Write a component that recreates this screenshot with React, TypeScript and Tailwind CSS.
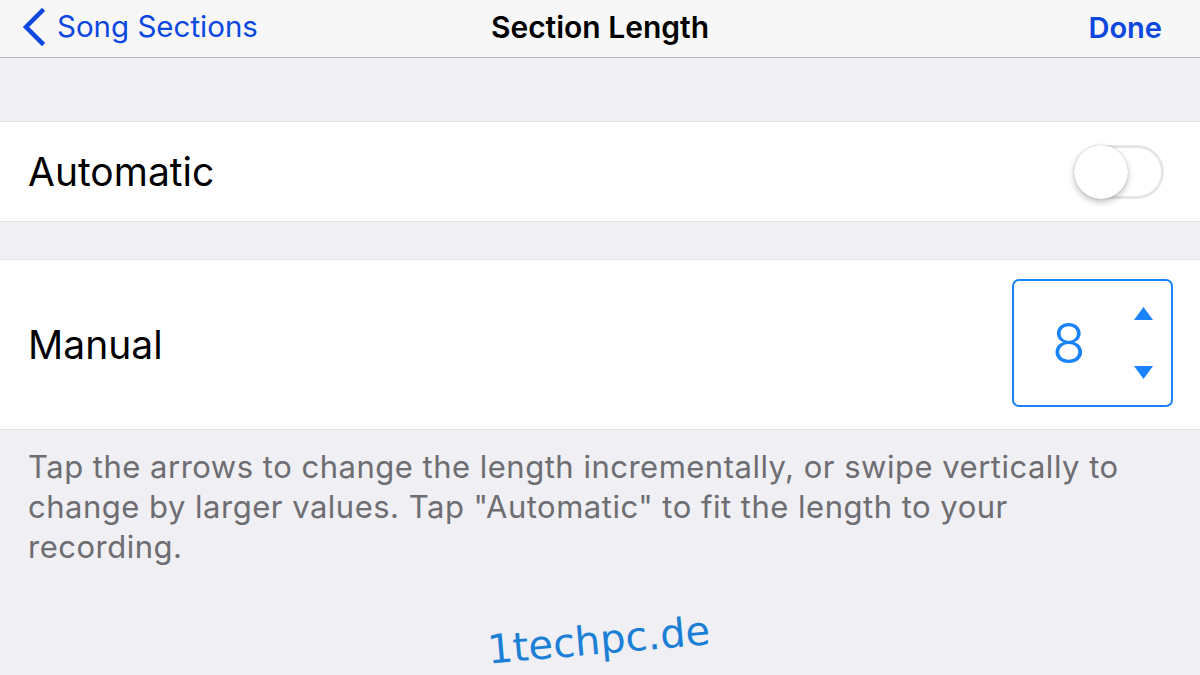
import React from 'react';

function Toggle() {
  return (
    <div className="relative w-[90px] h-[54px] rounded-full border-[3px] border-[#e5e5ea] bg-white">
      <div className="absolute left-[-3px] top-[-3px] w-[54px] h-[54px] rounded-full bg-white shadow-[0_3px_6px_rgba(0,0,0,0.25),0_0_1px_rgba(0,0,0,0.3)]" />
    </div>
  );
}

function Stepper() {
  return (
    <div className="w-[161px] h-[128px] rounded-[7px] border-2 border-[#1a82fb] flex items-center">
      <div className="flex-1 pl-[38px] text-[55px] font-light text-[#1a82fb] leading-none">8</div>
      <div className="flex flex-col justify-between h-[72px] pr-[18px]">
        <svg width="19" height="13" viewBox="0 0 19 13">
          <path d="M9.5 0 L19 13 L0 13 Z" fill="#1a82fb" />
        </svg>
        <svg width="19" height="13" viewBox="0 0 19 13">
          <path d="M0 0 L19 0 L9.5 13 Z" fill="#1a82fb" />
        </svg>
      </div>
    </div>
  );
}

export default function App() {
  return (
    <div className="w-[1200px] h-[675px] overflow-hidden bg-[#efeff4] font-['Inter',sans-serif] flex flex-col select-none">
      {/* nav bar */}
      <div className="h-[58px] bg-[#f7f7f8] border-b border-[#b9b9bd] flex items-center pl-[20px] pr-[22px] pb-[3px] relative shrink-0">
        <div className="flex items-center gap-[11px] text-[#0c47e0]">
          <svg width="26" height="40" viewBox="0 0 26 40">
            <path d="M22 4 L6 20 L22 36" fill="none" stroke="#0c47e0" strokeWidth="4.5" strokeLinecap="square" />
          </svg>
          <span className="text-[29.5px] leading-none">Song Sections</span>
        </div>
        <div className="absolute left-0 right-0 text-center text-[30px] font-semibold text-black leading-none pointer-events-none">
          Section Length
        </div>
        <div className="ml-auto pr-[16px] text-[29px] font-semibold text-[#0c47e0] leading-none">Done</div>
      </div>

      <div className="h-[63px] shrink-0" />

      <div className="h-[101px] bg-white border-y border-[#e2e2e6] flex items-center pl-[28px] pr-[36px] shrink-0">
        <span className="text-[39px] text-black leading-none">Automatic</span>
        <div className="ml-auto">
          <Toggle />
        </div>
      </div>

      <div className="h-[37px] shrink-0" />

      <div className="h-[171px] bg-white border-y border-[#e2e2e6] flex items-center pl-[28px] pr-[27px] shrink-0">
        <span className="text-[39px] text-black leading-none">Manual</span>
        <div className="ml-auto mb-[3px]">
          <Stepper />
        </div>
      </div>

      <p className="pl-[28px] pr-[50px] pt-[17px] text-[31px] leading-[40px] text-[#6d6d72] tracking-[0.5px]">
        Tap the arrows to change the length incrementally, or swipe vertically to change by larger values. Tap "Automatic" to fit the length to your recording.
      </p>

      <div className="flex justify-center pt-[53px]">
        <span className="ml-[-2px] -rotate-[5deg] text-[40px] text-[#1c7fd6] font-['DejaVu_Sans',sans-serif] leading-none">
          1techpc.de
        </span>
      </div>
    </div>
  );
}
